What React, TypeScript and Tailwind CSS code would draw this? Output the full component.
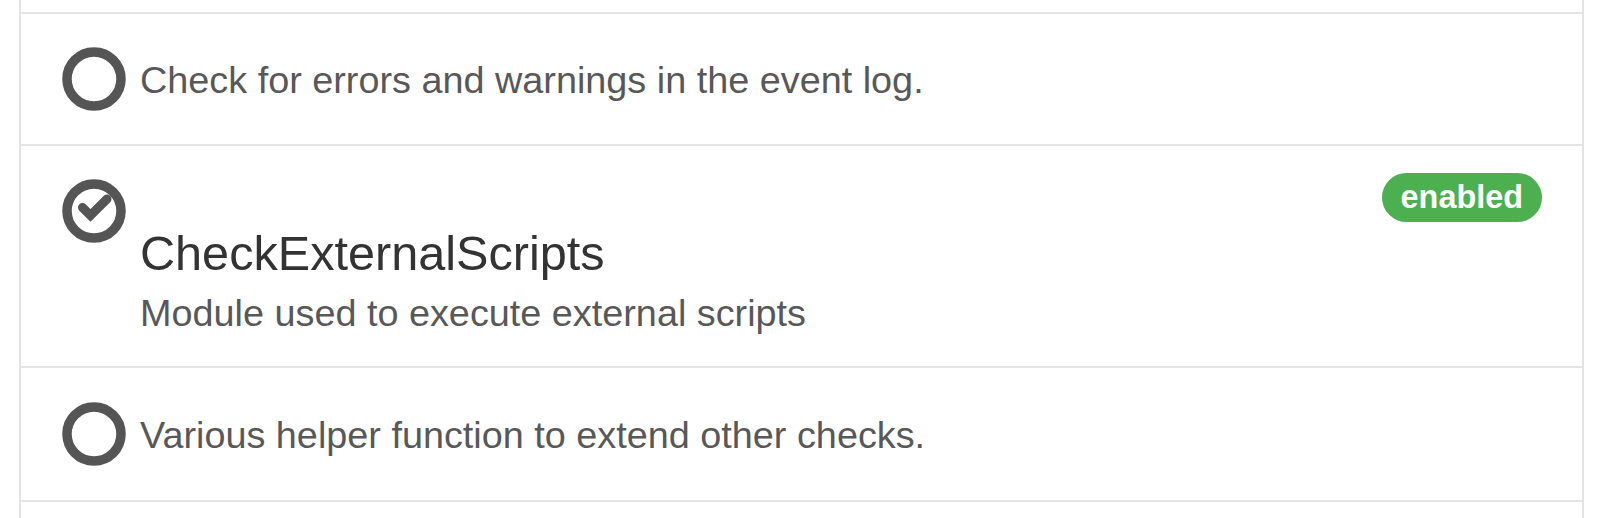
import React from 'react';

// Ring icon (unchecked module)
const CircleIcon = () => (
  <svg width="64" height="64" viewBox="0 0 64 64" className="shrink-0">
    <circle cx="32" cy="32" r="27" fill="none" stroke="#555555" strokeWidth="9.5" />
  </svg>
);

// Ring with a check mark (enabled module)
const CheckCircleIcon = () => (
  <svg width="64" height="64" viewBox="0 0 64 64" className="shrink-0">
    <circle cx="32" cy="32" r="27" fill="none" stroke="#555555" strokeWidth="9.5" />
    <polyline
      points="20.5,28.5 28.5,36.5 45,20"
      fill="none"
      stroke="#555555"
      strokeWidth="9"
      strokeLinecap="round"
      strokeLinejoin="miter"
    />
  </svg>
);

interface Module {
  name?: string;
  description: string;
  enabled: boolean;
  height?: string;
}

const modules: Module[] = [
  { description: 'Check for errors and warnings in the event log.', enabled: false, height: 'h-[132px]' },
  { name: 'CheckExternalScripts', description: 'Module used to execute external scripts', enabled: true },
  { description: 'Various helper function to extend other checks.', enabled: false, height: 'h-[134px]' },
];

const ModuleRow = ({ mod }: { mod: Module }) => {
  if (!mod.enabled) {
    return (
      <div className={`${mod.height} border-t-2 border-[#e4e4e4] pl-[41px] pr-[40px] flex items-center gap-[14px]`}>
        <CircleIcon />
        <span className="text-[37.8px] leading-[54px] text-[#585858] mt-[2px]">{mod.description}</span>
      </div>
    );
  }

  return (
    <div className="h-[222px] border-t-2 border-[#e4e4e4] pl-[41px] pr-[40px] pt-[27px] flex gap-[14px]">
      <div className="pt-[6px]">
        <CheckCircleIcon />
      </div>
      <div className="flex-1 flex flex-col">
        <div className="flex justify-end">
          <span className="h-[49px] px-[19px] rounded-full bg-[#4caf50] text-white font-bold text-[32.4px] leading-none flex items-center">
            enabled
          </span>
        </div>
        <div className="text-[48.6px] leading-[54px] text-[#333333] mt-[4px]">{mod.name}</div>
        <div className="text-[37.8px] leading-[52px] text-[#585858] mt-[7px]">{mod.description}</div>
      </div>
    </div>
  );
};

export default function App() {
  return (
    <div
      className="w-[1608px] h-[518px] overflow-hidden bg-white"
      style={{ fontFamily: '"Liberation Sans", Arial, sans-serif' }}
    >
      <div className="ml-[19px] w-[1565px] border-x-2 border-[#e4e4e4] bg-white">
        <div className="h-[12px]" />
        {modules.map((m, i) => (
          <ModuleRow key={i} mod={m} />
        ))}
        <div className="h-[20px] border-t-2 border-[#e4e4e4]" />
      </div>
    </div>
  );
}
